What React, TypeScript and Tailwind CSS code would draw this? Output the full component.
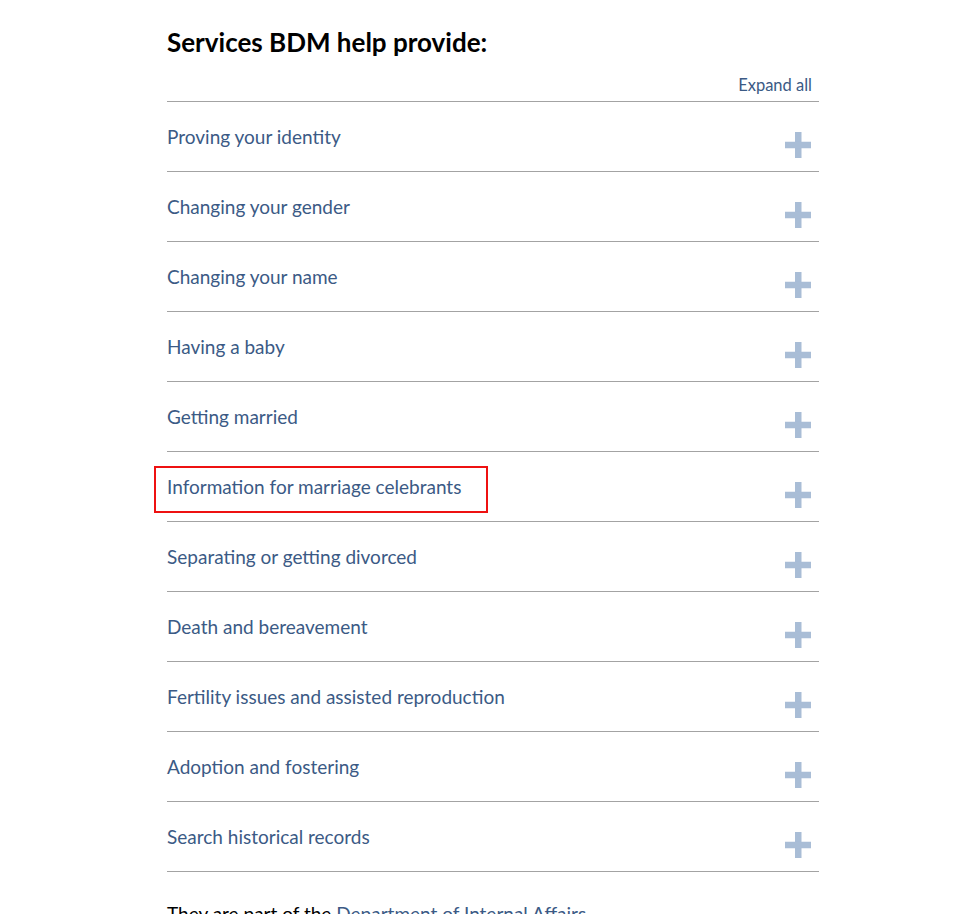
import { useState } from "react";

const services = [
  "Proving your identity",
  "Changing your gender",
  "Changing your name",
  "Having a baby",
  "Getting married",
  "Information for marriage celebrants",
  "Separating or getting divorced",
  "Death and bereavement",
  "Fertility issues and assisted reproduction",
  "Adoption and fostering",
  "Search historical records",
];

function PlusIcon() {
  return (
    <svg width="26" height="26" viewBox="0 0 26 26" className="shrink-0">
      <rect x="10" y="0" width="6.5" height="26" fill="#a9bdd6" />
      <rect x="0" y="9.75" width="26" height="6.5" fill="#a9bdd6" />
    </svg>
  );
}

export default function App() {
  const [open, setOpen] = useState<number[]>([]);

  const toggle = (i: number) => {
    setOpen(open.includes(i) ? open.filter((x) => x !== i) : [...open, i]);
  };

  return (
    <div className="min-h-[914px] bg-white font-['Lato','Noto_Sans',sans-serif]">
      <div className="w-[652px] ml-[167px] pt-[24px]">
        <h2 className="text-[26px] font-bold text-black leading-[36px]">
          Services BDM help provide:
        </h2>
        <div className="flex justify-end mt-[14px] pr-[7px]">
          <button className="text-[16.5px] text-[#3b5a85] leading-[22px]">
            Expand all
          </button>
        </div>
        <div className="mt-[5px] border-t border-[#a3a3a3]">
          {services.map((s, i) => (
            <div key={s} className="border-b border-[#a3a3a3]">
              <button
                onClick={() => toggle(i)}
                className="relative w-full h-[69px] flex items-start justify-between text-left"
              >
                <span className="pt-[23px] text-[19px] leading-[24px] text-[#3b5a85]">
                  {s}
                </span>
                <span className="pt-[30px] pr-[8px]">
                  <PlusIcon />
                </span>
                {i === 5 && (
                  <span className="absolute left-[-13px] top-[14px] w-[334px] h-[47px] border-2 border-[#ee1111]" />
                )}
              </button>
            </div>
          ))}
        </div>
        <p className="mt-[30px] text-[19px] leading-[24px] text-black">
          They are part of the{" "}
          <a className="text-[#3b5a85]">Department of Internal Affairs</a>
        </p>
      </div>
    </div>
  );
}
